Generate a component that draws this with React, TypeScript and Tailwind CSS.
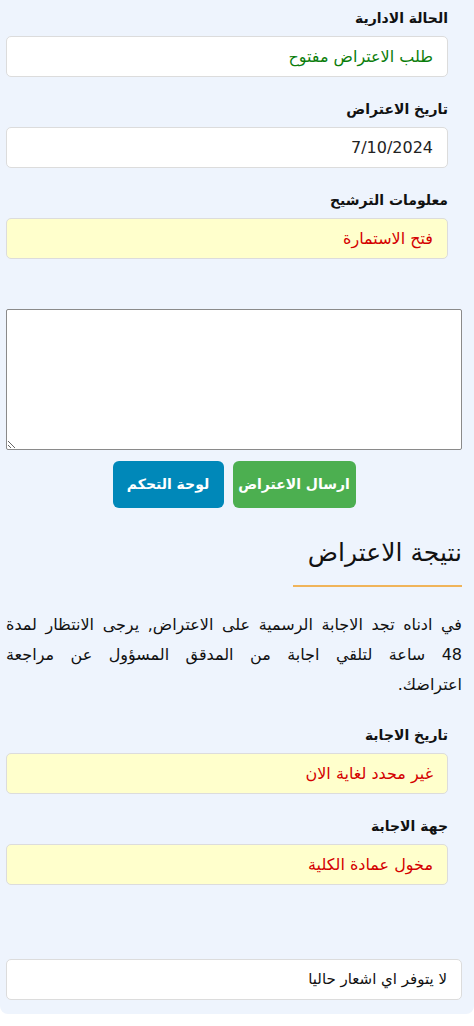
import * as React from "react";

interface FieldProps {
  label: string;
  value: string;
  tone: "green" | "plain" | "red";
}

const Field: React.FC<FieldProps> = ({ label, value, tone }) => {
  const box =
    tone === "red"
      ? "bg-[#ffffcc] text-[#d40000]"
      : tone === "green"
        ? "bg-white text-[#0a7d0a]"
        : "bg-white text-[#222]";
  return (
    <div className="flex flex-col">
      <label className="text-[14px] font-bold text-[#111] leading-[20px] mb-[8px]">
        {label}
      </label>
      <div
        className={`h-[41px] flex items-center px-[14px] border border-[#dcdcdc] rounded-[5px] text-[16px] ${box}`}
      >
        {value}
      </div>
    </div>
  );
};

export default function App() {
  return (
    <div
      dir="rtl"
      className="w-[474px] min-h-[1026px] bg-white"
      style={{ fontFamily: '"DejaVu Sans", "Noto Sans", sans-serif' }}
    >
      <div className="bg-[#eef4fd] rounded-b-[8px] pr-[12px] pl-[6px] pt-[8px] pb-[14px]">
        <div className="mr-[14px] flex flex-col gap-[22px]">
          <Field label="الحالة الادارية" value="طلب الاعتراض مفتوح" tone="green" />
          <Field label="تاريخ الاعتراض" value="7/10/2024" tone="plain" />
          <Field label="معلومات الترشيح" value="فتح الاستمارة" tone="red" />
        </div>

        <textarea className="block mt-[50px] w-full h-[141px] bg-white border border-[#8a8a8a] rounded-[2px] resize-y" />

        <div className="flex justify-center gap-[9px] mt-[11px]">
          <button className="w-[123px] h-[47px] rounded-[6px] bg-[#4caf50] text-white font-bold text-[14px]">
            ارسال الاعتراض
          </button>
          <button className="w-[111px] h-[47px] rounded-[6px] bg-[#0088b9] text-white font-bold text-[14px]">
            لوحة التحكم
          </button>
        </div>

        <h2 className="mt-[27px] text-[25px] font-medium text-[#111] leading-[36px]">
          نتيجة الاعتراض
        </h2>
        <div className="mt-[14px] w-[169px] h-[2px] bg-[#f0b45a]" />

        <p className="mt-[23px] text-[16px] leading-[30px] text-[#111] text-justify [word-spacing:3px]">
          في ادناه تجد الاجابة الرسمية على الاعتراض, يرجى الانتظار لمدة 48 ساعة لتلقي اجابة من المدقق المسؤول عن مراجعة اعتراضك.
        </p>

        <div className="mt-[25px] mr-[14px] flex flex-col gap-[22px]">
          <Field label="تاريخ الاجابة" value="غير محدد لغاية الان" tone="red" />
          <Field label="جهة الاجابة" value="مخول عمادة الكلية" tone="red" />
        </div>

        <div className="mt-[74px] h-[41px] flex items-center px-[14px] bg-white border border-[#dcdcdc] rounded-[5px] text-[15px] text-[#111]">
          لا يتوفر اي اشعار حاليا
        </div>
      </div>
    </div>
  );
}
